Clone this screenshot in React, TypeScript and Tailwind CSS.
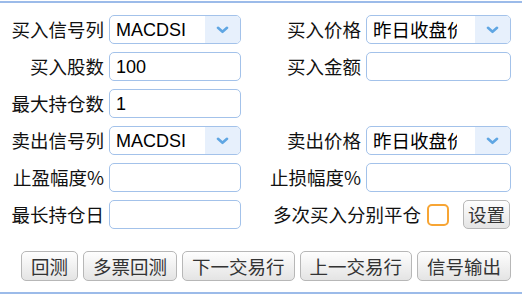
import React from 'react'

const cjk = "font-['Noto_Sans_CJK_SC','Noto_Sans',sans-serif]"

const Chevron = () => (
  <svg width="13" height="8" viewBox="0 0 13 8" fill="none">
    <path d="M2 1.8l4.5 4L11 1.8" stroke="#5fa6e3" strokeWidth="2.6" strokeLinecap="round" strokeLinejoin="round" />
  </svg>
)

const Label = ({ text }: { text: string }) => (
  <div className={`flex h-[29px] items-center justify-end whitespace-nowrap text-[18.5px] leading-none text-[#111] ${cjk}`}>{text}</div>
)

const Field = ({ value = '' }: { value?: string }) => (
  <div className="flex h-[29px] items-center rounded-[5px] border border-[#a3c2ea] bg-white pl-[6px] font-['Liberation_Sans',Arial,sans-serif] text-[18px] leading-none text-black">
    {value}
  </div>
)

const Select = ({ value, cjkText }: { value: string; cjkText?: boolean }) => (
  <div className="flex h-[29px] items-stretch overflow-hidden rounded-[5px] border border-[#a3c2ea] bg-white">
    <div className="flex flex-1 items-center pl-[6px]">
      {cjkText ? (
        <span className={`block w-[84px] overflow-hidden whitespace-nowrap text-[18.5px] leading-none text-black ${cjk}`}>{value}</span>
      ) : (
        <span className="block whitespace-nowrap font-['Liberation_Sans',Arial,sans-serif] text-[18px] leading-none text-black">{value}</span>
      )}
    </div>
    <div className="flex w-[35px] items-center justify-center bg-[#e7f0fc]">
      <Chevron />
    </div>
  </div>
)

const Btn = ({ text, className = 'h-[30px] px-[9px]' }: { text: string; className?: string }) => (
  <button
    className={`flex items-center justify-center rounded-[5px] border border-[#b7b7b7] bg-gradient-to-b from-[#fefefe] to-[#e4e4e4] text-[18.5px] leading-none text-[#333] ${cjk} ${className}`}
  >
    {text}
  </button>
)

export default function App() {
  return (
    <div className="h-[294px] w-[522px] bg-white pt-[1px]">
      <div className="flex h-[293px] flex-col border-y-2 border-[#9cbbe9] pt-[12px]">
        <div className="grid grid-cols-[104px_132px_115px_145px] grid-rows-[29px_29px_29px_29px_29px_29px] gap-x-[5px] gap-y-[8px]">
          <Label text="买入信号列" />
          <Select value="MACDSI" />
          <Label text="买入价格" />
          <Select value="昨日收盘价" cjkText />

          <Label text="买入股数" />
          <Field value="100" />
          <Label text="买入金额" />
          <Field />

          <Label text="最大持仓数" />
          <Field value="1" />
          <div />
          <div />

          <Label text="卖出信号列" />
          <Select value="MACDSI" />
          <Label text="卖出价格" />
          <Select value="昨日收盘价" cjkText />

          <Label text="止盈幅度%" />
          <Field />
          <Label text="止损幅度%" />
          <Field />

          <Label text="最长持仓日" />
          <Field />
          <div className="col-span-2 flex items-center justify-end pr-[1px]">
            <span className={`whitespace-nowrap text-[18.5px] leading-none text-[#111] ${cjk}`}>多次买入分别平仓</span>
            <span className="ml-[6px] h-[22px] w-[22px] rounded-[5px] border-2 border-[#f7a534] bg-white" />
            <Btn text="设置" className="ml-[14px] h-[29px] w-[47px]" />
          </div>
        </div>

        <div className="mt-[22px] flex gap-[5px] pl-[21px]">
          <Btn text="回测" />
          <Btn text="多票回测" />
          <Btn text="下一交易行" />
          <Btn text="上一交易行" />
          <Btn text="信号输出" />
        </div>
      </div>
    </div>
  )
}
